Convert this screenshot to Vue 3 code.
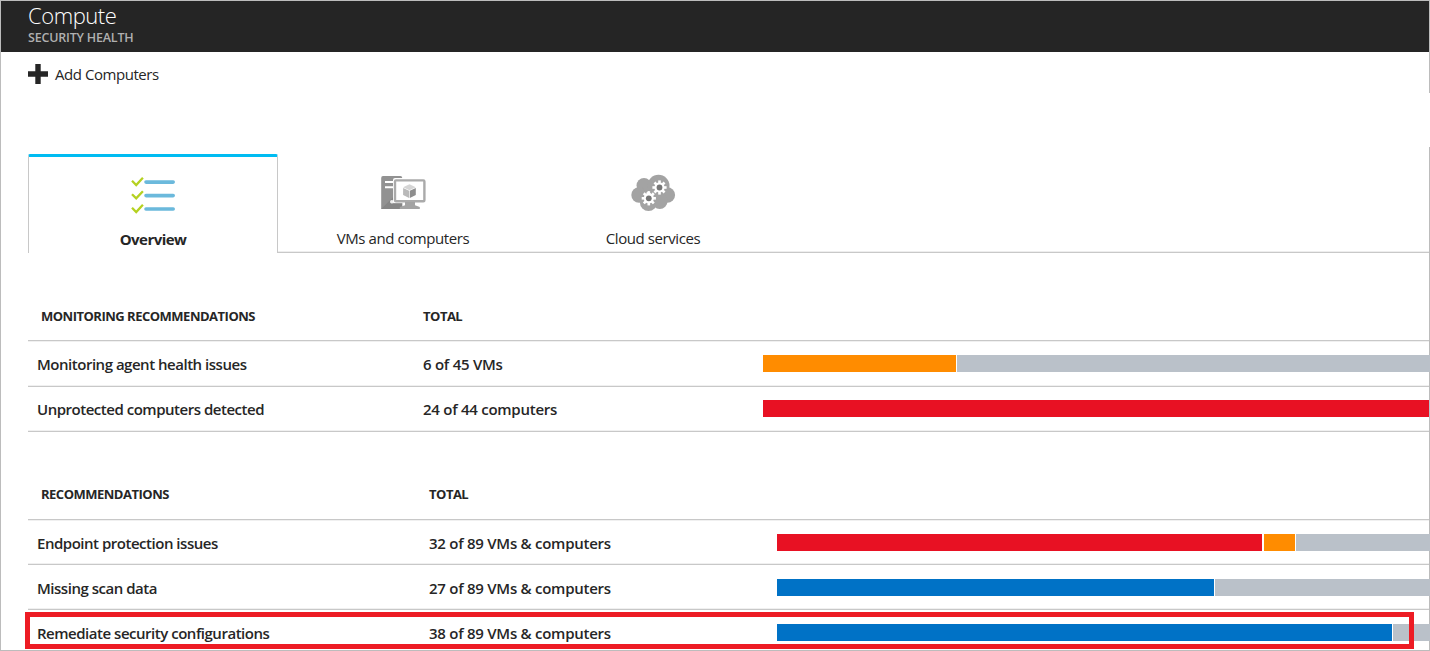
<script setup>
const sections = [
  {
    title: 'MONITORING RECOMMENDATIONS',
    kind: 'monitoring',
    rows: [
      { name: 'Monitoring agent health issues', total: '6 of 45 VMs', bars: [['orange', 193, 1]] },
      { name: 'Unprotected computers detected', total: '24 of 44 computers', bars: [['red', 666, 0]] },
    ],
  },
  {
    title: 'RECOMMENDATIONS',
    kind: 'general',
    rows: [
      { name: 'Endpoint protection issues', total: '32 of 89 VMs & computers', bars: [['red', 485, 2], ['orange', 31, 1]] },
      { name: 'Missing scan data', total: '27 of 89 VMs & computers', bars: [['blue', 437, 1]] },
      { name: 'Remediate security configurations', total: '38 of 89 VMs & computers', bars: [['blue', 615, 1]] },
    ],
  },
]
const teeth = [0, 45, 90, 135, 180, 225, 270, 315]
</script>

<template>
  <div class="blade">
    <header class="head">
      <h1><span>Compute</span></h1>
      <p><span>SECURITY HEALTH</span></p>
    </header>
    <div class="toolbar">
      <svg width="20" height="20" viewBox="0 0 20 20"><path d="M7.3 0h5.4v7.3H20v5.4h-7.3V20H7.3v-7.3H0V7.3h7.3z" fill="#262626" /></svg>
      <span class="add">Add Computers</span>
    </div>
    <nav class="tabs">
      <div class="tab active">
        <svg width="46" height="40" viewBox="130 174 46 40" fill="none">
          <g stroke="#b5d121" stroke-width="2.3">
            <path d="M132 180.8l4.2 4.2 6.7-7.2M132 194.2l4.2 4.2 6.7-7.2M132 207.8l4.2 4.2 6.7-7.2" />
          </g>
          <g stroke="#6bb9dc" stroke-width="3.6" stroke-linecap="round">
            <path d="M146 182.1h27.2M146 195.6h27.2M146 209h27.2" />
          </g>
        </svg>
        <span class="label over">Overview</span>
      </div>
      <div class="tab">
        <svg width="46" height="40" viewBox="380 173 46 40">
          <path d="M383 176h17.5q1.7 0 1.7 1.7V209h-21V178q0-2 1.8-2z" fill="#929292" />
          <path d="M381.2 209l21-21v21z" fill="#868686" />
          <path d="M385 182h9M385 187.2h9" stroke="#fff" stroke-width="2.1" />
          <path d="M391.5 202h11" stroke="#eee" stroke-width="2.4" />
          <circle cx="391.8" cy="201.8" r="1.8" fill="#eee" />
          <rect x="393" y="178" width="34" height="25" rx="2" fill="#fff" />
          <rect x="395" y="180.4" width="29.4" height="20.8" rx="1" fill="#fff" stroke="#aaa" stroke-width="2.4" />
          <path d="M405 202h10v3.3l4.8 1.8v1.8h-20v-1.8l5.2-1.8z" fill="#a3a3a3" />
          <path d="M409.5 184.3l6.2 3-6.2 3-6.4-3z" fill="#d5d5d5" />
          <path d="M403.1 187.9l6 2.9v7.2l-6-3.1z" fill="#b9b9b9" />
          <path d="M415.8 187.9l-6 2.9v7.2l6-3.1z" fill="#8e8e8e" />
        </svg>
        <span class="label vms">VMs and computers</span>
      </div>
      <div class="tab">
        <svg width="46" height="40" viewBox="630 173 46 40">
          <g fill="#a3a3a3">
            <circle cx="644" cy="185.5" r="7.5" />
            <circle cx="639" cy="195" r="7.7" />
            <circle cx="658.5" cy="185.8" r="11" />
            <circle cx="667.3" cy="195" r="7.8" />
            <circle cx="648.5" cy="202.5" r="8.6" />
            <circle cx="659.8" cy="201.3" r="7.7" />
          </g>
          <g v-for="c in [[659.5, 187.5], [648.8, 198.3]]" :key="c[0]" :transform="`translate(${c[0]} ${c[1]})`">
            <rect v-for="t in teeth" :key="t" x="-1.3" y="-7.1" width="2.6" height="4" fill="#fff" :transform="`rotate(${t})`" />
            <circle r="5.1" fill="#fff" />
            <circle r="2.9" fill="#777" />
          </g>
        </svg>
        <span class="label cloud">Cloud services</span>
      </div>
    </nav>
    <section v-for="s in sections" :key="s.kind" :class="s.kind">
      <div class="thead">
        <b>{{ s.title }}</b><b class="sum">TOTAL</b>
      </div>
      <div v-for="r in s.rows" :key="r.name" class="row">
        <span class="name">{{ r.name }}</span>
        <span class="total">{{ r.total }}</span>
        <div class="track">
          <i v-for="b in r.bars" :key="b[0]" :class="b[0]" :style="{ width: b[1] + 'px', marginRight: b[2] + 'px' }"></i>
          <i class="rest"></i>
        </div>
      </div>
    </section>
    <div class="edge top"></div>
    <div class="edge left"></div>
    <div class="edge bottom"></div>
    <div class="edge right-a"></div>
    <div class="edge right-b"></div>
    <div class="focus"></div>
  </div>
</template>

<style>
body { margin: 0; overflow: hidden; background: #fff; }
</style>

<style scoped>
.blade { position: relative; width: 1430px; height: 651px; overflow: hidden; font-family: "Open Sans", "Noto Sans", sans-serif; color: #262626; background: #fff; white-space: nowrap; }
.head { height: 52px; box-sizing: border-box; padding: 2px 0 0 28px; background: #252525; }
h1 { margin: 0; font-size: 22px; line-height: 27px; font-weight: 300; color: #fff; letter-spacing: -0.45px; }
p { margin: 0; font-size: 12.5px; line-height: 17px; font-weight: 600; color: #b0b0b0; letter-spacing: -0.2px; }
.toolbar { height: 102px; box-sizing: border-box; padding: 11px 0 0 28px; display: flex; align-items: flex-start; gap: 7px; }
.toolbar svg { margin-top: 0.5px; }
.add { font-size: 15px; line-height: 22px; letter-spacing: -0.45px; }
.tabs { height: 99px; margin-left: 28px; display: flex; background: linear-gradient(#eee, #eee) 0 97px / 100% 1px no-repeat, linear-gradient(#c8c8c8, #c8c8c8) 0 98px / 100% 1px no-repeat; }
.tab { width: 250px; height: 99px; box-sizing: border-box; display: flex; flex-direction: column; align-items: center; padding-top: 19px; }
.active { background: #fff; border: 1px solid #c8c8c8; border-top: 3px solid #00bcf2; border-bottom: 0; border-radius: 2px 2px 0 0; padding-top: 17px; }
.label { font-size: 15px; line-height: 20px; margin-top: 15px; letter-spacing: -0.42px; }
.over { font-weight: 700; letter-spacing: -0.55px; }
.thead { display: flex; height: 88px; box-sizing: border-box; border-bottom: 1px solid #c8c8c8; margin-left: 28px; padding: 53px 0 0 13px; font-size: 13px; line-height: 20px; letter-spacing: -0.5px; }
.general .thead { padding-top: 52px; }
.thead b:first-child { width: 382px; font-weight: 700; }
.general .thead b:first-child { width: 388px; }
.row { display: flex; align-items: center; height: 45px; box-sizing: border-box; border-bottom: 1px solid #c8c8c8; margin-left: 28px; padding-left: 9px; font-size: 15px; font-weight: 600; box-shadow: inset 0 -1px #f0f0f0; }
.thead + .row { box-shadow: inset 0 -1px #f0f0f0, inset 0 1px #f0f0f0; }
.monitoring .thead + .row { height: 46px; }
.monitoring .thead + .row > span { padding-top: 0; }
.monitoring .row:last-child { padding-bottom: 2px; }
.name { width: 386px; padding-top: 2px; letter-spacing: -0.48px; }
.total { width: 340px; padding-top: 2px; letter-spacing: -0.26px; }
.general .name { width: 392px; }
.general .total { width: 348px; }
.track { display: flex; flex: 1; height: 17px; position: relative; z-index: 2; }
.track i { flex: none; height: 17px; }
.track .rest { flex: 1; background: #bac1c9; }
.orange { background: #ff8c00; }
.red { background: #e81123; }
.blue { background: #0072c6; }
.edge { position: absolute; background: #bcbcbc; z-index: 1; }
.top { left: 0; right: 0; top: 0; height: 1px; }
.left { left: 0; top: 0; bottom: 0; width: 1px; }
.bottom { left: 0; right: 0; bottom: 0; height: 1px; }
.right-a { right: 0; top: 0; height: 93px; width: 1px; }
.right-b { right: 0; top: 147px; bottom: 0; width: 1px; }
.focus { position: absolute; z-index: 3; left: 25px; top: 612px; width: 1389px; height: 37px; box-sizing: border-box; border: 5px solid #ed1c24; }
</style>
